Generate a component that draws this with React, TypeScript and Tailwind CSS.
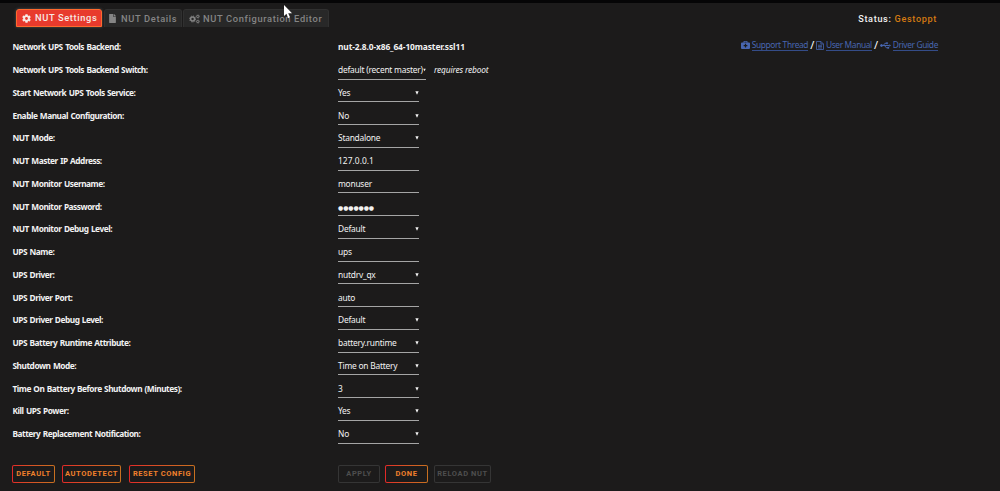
import React from "react";
import { FaCog, FaFile } from "react-icons/fa";

type Field = {
  label: string;
  value: string;
  kind: "text" | "select" | "input" | "password";
  note?: string;
};

const fields: Field[] = [
  { label: "Network UPS Tools Backend:", value: "nut-2.8.0-x86_64-10master.ssl11", kind: "text" },
  { label: "Network UPS Tools Backend Switch:", value: "default (recent master)", kind: "select", note: "requires reboot" },
  { label: "Start Network UPS Tools Service:", value: "Yes", kind: "select" },
  { label: "Enable Manual Configuration:", value: "No", kind: "select" },
  { label: "NUT Mode:", value: "Standalone", kind: "select" },
  { label: "NUT Master IP Address:", value: "127.0.0.1", kind: "input" },
  { label: "NUT Monitor Username:", value: "monuser", kind: "input" },
  { label: "NUT Monitor Password:", value: "●●●●●●●", kind: "password" },
  { label: "NUT Monitor Debug Level:", value: "Default", kind: "select" },
  { label: "UPS Name:", value: "ups", kind: "input" },
  { label: "UPS Driver:", value: "nutdrv_qx", kind: "select" },
  { label: "UPS Driver Port:", value: "auto", kind: "input" },
  { label: "UPS Driver Debug Level:", value: "Default", kind: "select" },
  { label: "UPS Battery Runtime Attribute:", value: "battery.runtime", kind: "select" },
  { label: "Shutdown Mode:", value: "Time on Battery", kind: "select" },
  { label: "Time On Battery Before Shutdown (Minutes):", value: "3", kind: "select" },
  { label: "Kill UPS Power:", value: "Yes", kind: "select" },
  { label: "Battery Replacement Notification:", value: "No", kind: "select" },
];

const CogsIcon = () => (
  <svg viewBox="0 0 20 18" className="h-[10px] w-[11px]" fill="none" stroke="currentColor">
    <circle cx="6.5" cy="9" r="3.6" strokeWidth="2.8" />
    <circle cx="6.5" cy="9" r="5.4" strokeWidth="1.8" strokeDasharray="2.2 2.04" />
    <circle cx="16" cy="4.4" r="2" strokeWidth="1.8" />
    <circle cx="16" cy="4.4" r="3.2" strokeWidth="1" strokeDasharray="1.5 1.2" />
    <circle cx="16" cy="13.6" r="2" strokeWidth="1.8" />
    <circle cx="16" cy="13.6" r="3.2" strokeWidth="1" strokeDasharray="1.5 1.2" />
  </svg>
);

const MedkitIcon = () => (
  <svg viewBox="0 0 18 16" className="mr-[2px] h-2 w-[9px]">
    <path
      fillRule="evenodd"
      fill="currentColor"
      d="M5 3V1.2Q5 0 6.2 0h5.6Q13 0 13 1.2V3h3q2 0 2 2v9q0 2-2 2H2q-2 0-2-2V5q0-2 2-2zM6.8 1.6V3h4.4V1.6zM7.8 5.5V8H5.3v2.6h2.5V13h2.4v-2.4h2.5V8h-2.5V5.5z"
    />
  </svg>
);

const ManualIcon = () => (
  <svg viewBox="0 0 16 18" className="mr-[2px] h-[9px] w-2" fill="none" stroke="currentColor" strokeWidth="1.6">
    <path d="M1 1h9l5 5v11H1zM9.8 1v5H15M4 8.5h8M4 11.2h8M4 14h8" />
  </svg>
);

const UsbIcon = () => (
  <svg viewBox="0 0 22 14" className="mr-[2px] h-[7px] w-[11px]" fill="none" stroke="currentColor" strokeWidth="1.9">
    <circle cx="3" cy="7" r="2" fill="currentColor" />
    <path d="M4 7h15M6.5 7l3.5-4.5h3M9 7l3.5 4.5h3" />
    <circle cx="14" cy="2.5" r="1.3" fill="currentColor" />
    <path d="M15 10h3v3h-3zM19 5l2.6 2-2.6 2z" fill="currentColor" strokeWidth="0.6" />
  </svg>
);

const Control = ({ field }: { field: Field }) => {
  if (field.kind === "text") {
    return <span className="font-bold tracking-[-0.1px]">{field.value}</span>;
  }
  return (
    <>
      <div
        className={`mt-[2px] flex h-[17px] shrink-0 items-center justify-between border-b border-[#a5a5a5] pb-px tracking-[-0.22px] ${
          field.note ? "w-[88px]" : "w-[81px]"
        }`}
      >
        {field.kind === "password" ? (
          <span className="pt-[2px] font-['DejaVu_Sans',sans-serif] text-[6px] tracking-[-0.1px]">{field.value}</span>
        ) : (
          <span className={field.value === "127.0.0.1" ? "tracking-[0.05px]" : ""}>{field.value}</span>
        )}
        {field.kind === "select" && (
          <svg viewBox="0 0 4 4" className={`h-[4px] shrink-0 ${field.note ? "w-[3px]" : "w-[4px]"}`}>
            <path d="M0.3 0.3h3.4L2 3.8z" fill="#f2f2f2" />
          </svg>
        )}
      </div>
      {field.note && <span className="ml-[8px] tracking-[-0.15px] italic">{field.note}</span>}
    </>
  );
};

const Button = ({ label, width, disabled }: { label: string; width: string; disabled?: boolean }) => (
  <button
    className={`h-[18px] rounded-[2px] p-px ${width} ${
      disabled ? "bg-[#353535] text-[#4e4e4e]" : "bg-gradient-to-r from-[#e22828] to-[#c87020] text-[#f0802c]"
    }`}
  >
    <span className="flex h-full items-center justify-center rounded-[1px] bg-[#1c1b1b] pt-px font-['Roboto',sans-serif] text-[7.5px] font-bold tracking-[0.6px] whitespace-nowrap">
      {label}
    </span>
  </button>
);

const App = () => {
  return (
    <div className="h-[491px] w-[1000px] overflow-hidden border-t-[3px] border-[#050506] bg-[#1c1b1b] font-['Noto_Sans',sans-serif] text-[8.4px] leading-[12px] text-[#f2f2f2] whitespace-nowrap">
      {/* tabs and status */}
      <div className="flex h-[33px] items-start justify-between pt-[6px] pr-[63px] pl-4 font-['Roboto',sans-serif]">
        <div className="relative flex h-[18px] gap-px text-[9.3px] font-medium text-[#858585]">
          <div className="flex w-[86px] items-center gap-[4px] rounded-t-[3px] border border-[#ff6a2e] bg-[#e83a2d] pl-[5px] text-[#f7e9e5] shadow-[0_0_3px_#555]">
            <FaCog className="h-[9px] w-[9px]" />
            <span className="tracking-[0.62px]">NUT Settings</span>
          </div>
          <div className="ml-px flex w-[78px] items-center gap-1 rounded-t-[3px] border border-b-0 border-[#303030] bg-[#282828] pl-[3px]">
            <FaFile className="h-[9px] w-[9px]" />
            <span className="tracking-[0.65px]">NUT Details</span>
          </div>
          <div className="flex w-[146px] items-center gap-[3px] rounded-t-[3px] border border-b-0 border-[#303030] bg-[#282828] pl-[5px]">
            <CogsIcon />
            <span className="tracking-[0.65px]">NUT Configuration Editor</span>
          </div>
          <svg viewBox="0 0 8 13" className="absolute top-[-4px] left-[268px] h-[13px] w-2">
            <path d="M0 0v11l2.5-2.2L4.1 13l1.9-.8-1.8-4H8z" fill="#fff" />
          </svg>
        </div>
        <div className="flex h-[18px] items-center gap-[3px] pt-px text-[9.1px] font-medium tracking-[0.67px]">
          <span>Status:</span>
          <span className="text-[#d47a12]">Gestoppt</span>
        </div>
      </div>

      {/* settings form and help links */}
      <div className="flex justify-between pr-[62px] pl-[12px]">
        <div>
          {fields.map((field) => (
            <div key={field.label} className="flex h-[22.76px] items-center">
              <span className="w-[326px] pl-[0.5px] text-[8.3px] font-bold tracking-[-0.46px] [word-spacing:0.7px]">
                {field.label}
              </span>
              <Control field={field} />
            </div>
          ))}
        </div>
        <div className="flex h-[18px] items-center tracking-[-0.36px] text-[#4866b0]">
          <MedkitIcon />
          <span className="border-b border-[#344c88] leading-[10px]">Support Thread</span>
          <span className="mx-[2px] text-[11px] text-white">/</span>
          <ManualIcon />
          <span className="border-b border-[#344c88] leading-[10px]">User Manual</span>
          <span className="mx-[2px] text-[11px] text-white">/</span>
          <UsbIcon />
          <span className="border-b border-[#344c88] leading-[10px]">Driver Guide</span>
        </div>
      </div>

      {/* form buttons */}
      <div className="mt-[19px] flex pl-[12px]">
        <div className="flex w-[326px]">
          <Button label="DEFAULT" width="w-[43px]" />
          <Button label="AUTODETECT" width="ml-[7px] w-[59px]" />
          <Button label="RESET CONFIG" width="ml-[8px] w-[66px]" />
        </div>
        <Button label="APPLY" width="w-[42px]" disabled />
        <Button label="DONE" width="ml-[5px] w-[43px]" />
        <Button label="RELOAD NUT" width="ml-[6px] w-[57px]" disabled />
      </div>
    </div>
  );
};

export default App;
